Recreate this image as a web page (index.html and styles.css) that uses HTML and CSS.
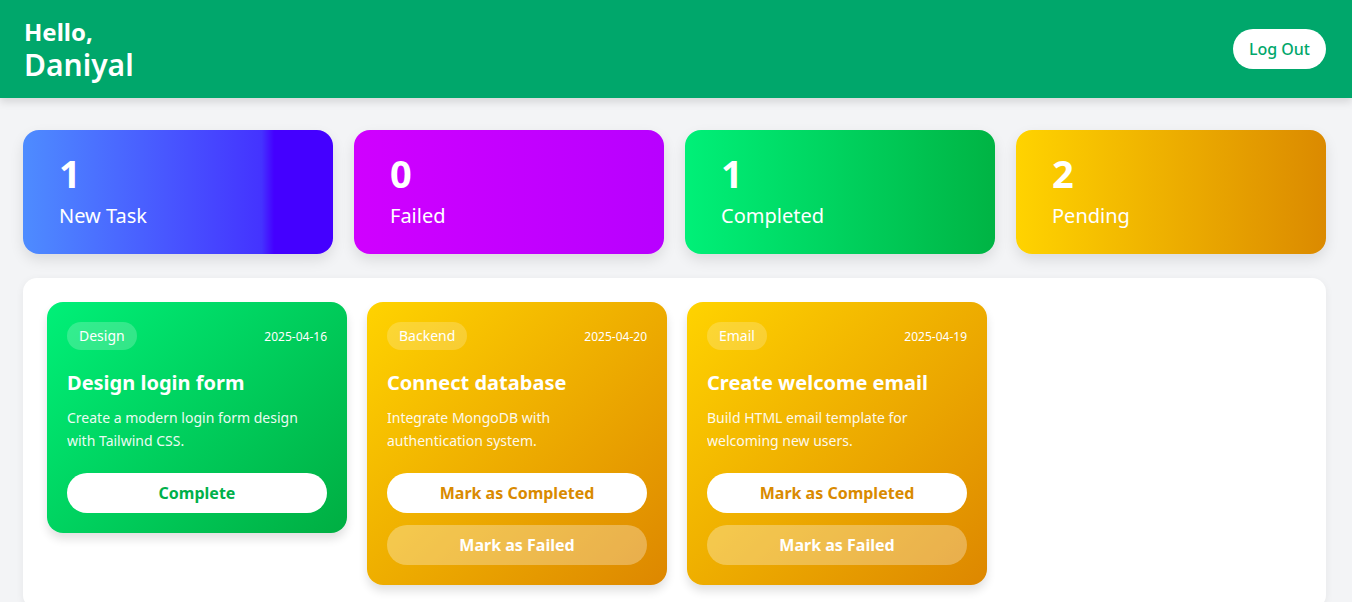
FILE: index.html
```html
<!DOCTYPE html>
<html lang="en">
<head>
<meta charset="utf-8">
<title>Dashboard</title>
<link rel="stylesheet" href="styles.css">
</head>
<body>
<header class="topbar">
  <div class="greeting">
    <div class="hello">Hello,</div>
    <div class="name">Daniyal</div>
  </div>
  <button class="logout">Log Out</button>
</header>
<main class="main">
  <section class="stats">
    <div class="stat stat-new"><div class="stat-num">1</div><div class="stat-label">New Task</div></div>
    <div class="stat stat-failed"><div class="stat-num">0</div><div class="stat-label">Failed</div></div>
    <div class="stat stat-completed"><div class="stat-num">1</div><div class="stat-label">Completed</div></div>
    <div class="stat stat-pending"><div class="stat-num">2</div><div class="stat-label">Pending</div></div>
  </section>
  <section class="panel">
    <div class="task task-green">
      <div class="task-head"><span class="tag">Design</span><span class="date">2025-04-16</span></div>
      <h3 class="task-title">Design login form</h3>
      <p class="task-desc">Create a modern login form design with Tailwind CSS.</p>
      <div class="actions">
        <button class="btn btn-solid btn-green">Complete</button>
      </div>
    </div>
    <div class="task task-yellow">
      <div class="task-head"><span class="tag">Backend</span><span class="date">2025-04-20</span></div>
      <h3 class="task-title">Connect database</h3>
      <p class="task-desc">Integrate MongoDB with authentication system.</p>
      <div class="actions">
        <button class="btn btn-solid btn-amber">Mark as Completed</button>
        <button class="btn btn-ghost">Mark as Failed</button>
      </div>
    </div>
    <div class="task task-yellow">
      <div class="task-head"><span class="tag">Email</span><span class="date">2025-04-19</span></div>
      <h3 class="task-title">Create welcome email</h3>
      <p class="task-desc">Build HTML email template for welcoming new users.</p>
      <div class="actions">
        <button class="btn btn-solid btn-amber">Mark as Completed</button>
        <button class="btn btn-ghost">Mark as Failed</button>
      </div>
    </div>
  </section>
</main>
</body>
</html>
```
FILE: styles.css
```css
* { box-sizing: border-box; }
html, body { margin: 0; padding: 0; }
body {
  background: #f3f4f6;
  font-family: "Noto Sans", "Open Sans", sans-serif;
  color: #fff;
}
.topbar {
  height: 98px;
  background: #00a76b;
  display: flex;
  align-items: center;
  justify-content: space-between;
  padding: 0 26px 0 24px;
  box-shadow: 0 4px 8px rgba(0,0,0,0.12);
}
.greeting { display: flex; flex-direction: column; gap: 1px; }
.hello { font-size: 24px; font-weight: 700; line-height: 30px; }
.name { font-size: 30px; font-weight: 600; line-height: 34px; }
.logout {
  background: #fff;
  color: #00a76b;
  border: none;
  border-radius: 999px;
  height: 40px;
  padding: 0 16px;
  font-family: inherit;
  font-size: 16px;
  font-weight: 500;
}
.main { padding: 32px 26px 0 23px; }
.stats {
  display: grid;
  grid-template-columns: repeat(4, 1fr);
  gap: 21px;
}
.stat {
  height: 124px;
  border-radius: 16px;
  padding: 21px 36px;
  box-shadow: 0 6px 14px rgba(0,0,0,0.1);
}
.stat-num { font-size: 38px; font-weight: 700; line-height: 44px; }
.stat-label { font-size: 20px; line-height: 28px; margin-top: 7px; }
.stat-new { background: linear-gradient(90deg, #4e8cff 0%, #4433ff 77%, #4400ff 81%, #4400ff 100%); }
.stat-failed { background: linear-gradient(90deg, #d000ff, #b800ff); }
.stat-completed { background: linear-gradient(90deg, #00f078, #00b444); }
.stat-pending { background: linear-gradient(90deg, #ffd300, #db8a00); }
.panel {
  margin-top: 24px;
  background: #fff;
  border-radius: 14px;
  padding: 24px;
  min-height: 330px;
  display: flex;
  align-items: flex-start;
  gap: 20px;
  box-shadow: 0 2px 8px rgba(0,0,0,0.06);
}
.task {
  width: 300px;
  border-radius: 16px;
  padding: 20px;
  box-shadow: 0 6px 10px rgba(0,0,0,0.12);
}
.task-green { background: linear-gradient(135deg, #00f078, #00ae42); }
.task-yellow { background: linear-gradient(135deg, #ffd300, #dd8700); }
.task-head { display: flex; justify-content: space-between; align-items: center; }
.tag {
  background: rgba(255,255,255,0.2);
  border-radius: 999px;
  height: 28px;
  line-height: 28px;
  padding: 0 12px;
  font-size: 14px;
}
.date { font-size: 12px; }
.task-title { margin: 19px 0 9px; font-size: 20px; font-weight: 700; line-height: 28px; }
.task-desc { margin: 0 0 21px; font-size: 14px; line-height: 23px; opacity: 0.92; }
.actions { display: flex; flex-direction: column; gap: 12px; }
.btn {
  height: 40px;
  border: none;
  border-radius: 999px;
  font-family: inherit;
  font-size: 16px;
  font-weight: 700;
  width: 100%;
}
.btn-solid { background: #fff; }
.btn-green { color: #00b04a; }
.btn-amber { color: #d98a00; }
.btn-ghost { background: rgba(255,255,255,0.3); color: #fff; }
```
